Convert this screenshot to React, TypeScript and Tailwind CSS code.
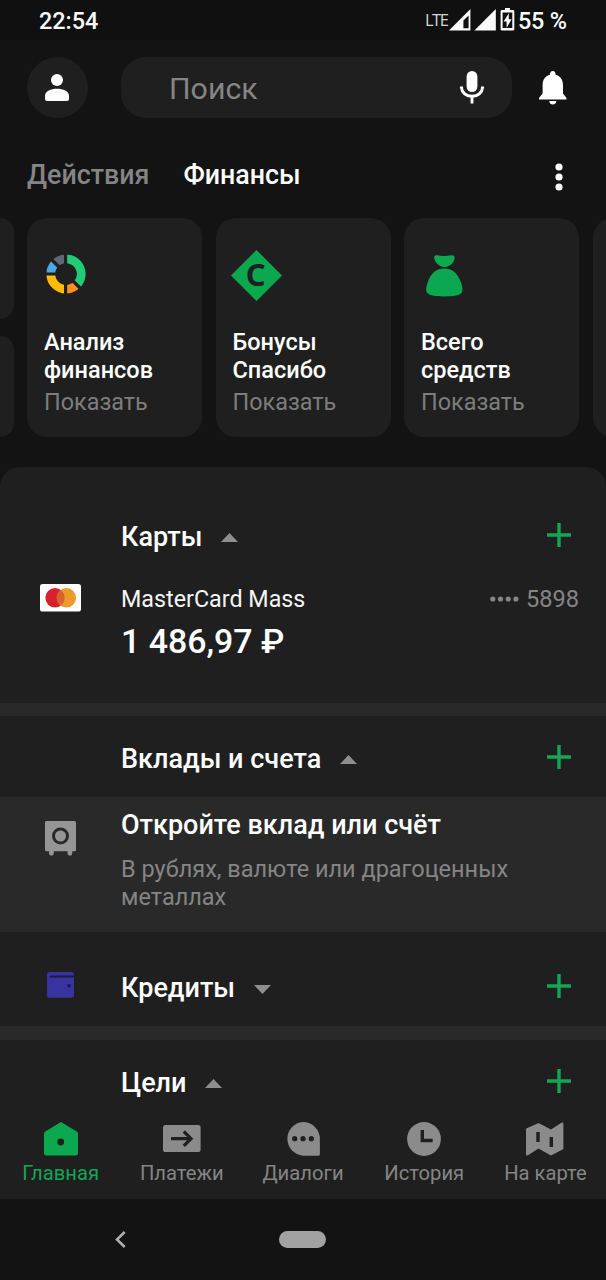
import React from 'react';

type IconProps = { className?: string };

const UserIcon = () => (
  <svg width="24" height="27" viewBox="0 0 24 27" fill="white">
    <circle cx="12" cy="6" r="6" />
    <path d="M0 22C0 17 6 14.7 12 14.7S24 17 24 22V25Q24 27 22 27H2Q0 27 0 25Z" />
  </svg>
);

const MicIcon = () => (
  <svg width="24" height="33" viewBox="0 0 24 33" fill="none">
    <rect x="6.6" y="0" width="10.8" height="21" rx="5.4" fill="white" />
    <path d="M1.4 15.5C1.4 21.5 6 25.3 12 25.3S22.6 21.5 22.6 15.5M12 25V32.5" stroke="white" strokeWidth="2.9" />
  </svg>
);

const BellIcon = () => (
  <svg width="28" height="34" viewBox="0 0 28 34" fill="white">
    <path d="M11 3.8C10.8 1.5 12 0 13.8 0S16.8 1.5 16.6 3.8C21.5 5 24 9 24 14V22.5L27.5 27V28.5H0V27L3.6 22.5V14C3.6 9 6 5 11 3.8Z" />
    <path d="M10.2 30H17.4Q16.8 33.5 13.8 33.5T10.2 30Z" />
  </svg>
);

const DonutIcon = () => (
  <svg width="40" height="40" viewBox="-20 -20 40 40" fill="none" strokeWidth="8.8">
    <path d="M0 -15.2A15.2 15.2 0 0 1 10.75 10.75" stroke="#21cc74" />
    <path d="M10.75 10.75A15.2 15.2 0 0 1 0 15.2" stroke="#ff8f1f" />
    <path d="M0 15.2A15.2 15.2 0 0 1 -15.2 0" stroke="#ffbb05" />
    <path d="M-15.2 0A15.2 15.2 0 0 1 -10.75 -10.75" stroke="#4ba9e6" />
    <path d="M-10.75 -10.75A15.2 15.2 0 0 1 0 -15.2" stroke="#5d6875" />
    <path d="M-.4 -20V20M-20 0H0M-15 -15L0 0L15 15" stroke="#1f1f1f" strokeWidth="3.2" />
  </svg>
);

const BonusIcon = () => (
  <svg width="51" height="51" viewBox="0 0 51 51">
    <path d="M25.5 0L51 25.5L25.5 51L0 25.5Z" fill="#0ba84f" />
    <text x="24.6" y="36.3" textAnchor="middle" fontSize="31" fontWeight="700" fontFamily="Noto Sans, Open Sans, sans-serif" fill="#1f1f1f">
      C
    </text>
  </svg>
);

const BagIcon = () => (
  <svg width="37" height="42" viewBox="0 0 37 42" fill="#0ba84f">
    <path d="M8.2 2C8.2 .5 9.6 0 11 .2C16 1.2 20 1.2 25.4 .2C27 0 28.6 .6 28.6 2.4C28.6 8 23 12 18.3 12S8.2 7.5 8.2 2Z" />
    <path d="M18.3 13.6C26 13.6 31 18 34 25C36 29.5 36.7 33 36.4 35.5C35.8 40.5 29 41.4 18.3 41.4S.9 40.5 .2 35.5C0 33 .6 29.5 2.6 25C5.6 18 10.6 13.6 18.3 13.6Z" />
  </svg>
);

const MastercardIcon = () => (
  <svg width="41" height="28" viewBox="0 0 41 28">
    <rect width="41" height="27.5" rx="2.6" fill="white" />
    <circle cx="15" cy="13.8" r="9.7" fill="#d6222f" />
    <circle cx="26.4" cy="13.8" r="9.7" fill="#ed9a2d" />
    <path d="M20.7 6A9.7 9.7 0 0 1 20.7 21.6A9.7 9.7 0 0 1 20.7 6Z" fill="#d8632f" />
  </svg>
);

const SafeIcon = () => (
  <svg width="31" height="35" viewBox="0 0 31 35" fill="#959595">
    <path d="M1.5 0H29.5Q31 0 31 1.5V28.8Q31 30.3 29.5 30.3H27.3V32.3A2.4 2.4 0 0 1 22.5 32.3V30.3H8.8V32.3A2.4 2.4 0 0 1 4 32.3V30.3H1.5Q0 30.3 0 28.8V1.5Q0 0 1.5 0Z" />
    <circle cx="15.5" cy="15" r="7" fill="none" stroke="#292929" strokeWidth="3" />
  </svg>
);

const WalletIcon = () => (
  <svg width="27" height="26" viewBox="0 0 27 26" className="-mt-px">
    <path d="M2.5 0H24.5Q27 0 27 2.5V23.5Q27 25.7 24.5 25.7H2.5Q0 25.7 0 23.5V2.5Q0 0 2.5 0Z" fill="#38339f" />
    <path d="M27 3.6H4Q2.6 3.8 2.6 4.7Q2.8 5.4 4 5.4H27Z" fill="#1c1b3f" />
    <circle cx="22" cy="13.8" r="1.8" fill="#1b1a45" />
  </svg>
);

const PlusIcon = () => (
  <svg width="24" height="24" viewBox="0 0 24 24">
    <path d="M12 0V24M0 12H24" stroke="#12a656" strokeWidth="3.4" />
  </svg>
);

const Caret = ({ className }: IconProps) => (
  <svg width="17" height="9" viewBox="0 0 17 9" className={className}>
    <path d="M0 9L8.5 0L17 9Z" fill="#8e8e8e" />
  </svg>
);

const HomeIcon = () => (
  <svg width="34" height="34" viewBox="0 0 34 34">
    <path d="M17 0L32.7 9.4Q34 10.2 34 11.8V31.3Q34 33.6 31.7 33.6H2.3Q0 33.6 0 31.3V11.8Q0 10.2 1.3 9.4Z" fill="#0ba84f" />
    <circle cx="16.7" cy="20" r="3.4" fill="#1f1f1f" />
  </svg>
);

const PaymentsIcon = () => (
  <svg width="38" height="27" viewBox="0 0 38 27">
    <rect width="37.6" height="27" rx="2.6" fill="#8b8b8b" />
    <path d="M8 13.7H27.5M20.8 6.5L28 13.7L20.8 20.9" fill="none" stroke="#1f1f1f" strokeWidth="3.2" />
  </svg>
);

const ChatIcon = () => (
  <svg width="34" height="34" viewBox="0 0 34 34">
    <path d="M17 0A16.9 16.9 0 0 1 33.9 16.9V32.3Q33.9 33.7 32.5 33.7H17A16.9 16.9 0 0 1 17 0Z" fill="#8b8b8b" />
    <g fill="#1f1f1f">
      <circle cx="8.7" cy="16.7" r="2.6" />
      <circle cx="17" cy="16.7" r="2.6" />
      <circle cx="25.3" cy="16.7" r="2.6" />
    </g>
  </svg>
);

const ClockIcon = () => (
  <svg width="34" height="34" viewBox="0 0 34 34">
    <circle cx="17" cy="17" r="16.9" fill="#8b8b8b" />
    <path d="M15.3 8V18.5H25.7" fill="none" stroke="#1f1f1f" strokeWidth="3.4" />
  </svg>
);

const MapIcon = () => (
  <svg width="38" height="34" viewBox="0 0 38 34">
    <path d="M0 7.5Q0 6.7 .8 6.3L11.5 1.5Q12.5 1 13.5 1.5L25 7.6L35.5 .8Q37.4 0 37.4 2V26.4Q37.4 27.2 36.6 27.6L26 33Q25 33.4 24 33L12.5 26.6L2 33.3Q0 34 0 32.4Z" fill="#8b8b8b" />
    <path d="M12 10V20M25.3 15V25" stroke="#1f1f1f" strokeWidth="3.4" />
  </svg>
);

const StatusBar = () => (
  <div className="flex h-10 items-center justify-between bg-[#101010] pl-[39px] pr-[39px] pt-[4px] text-[23.4px] font-medium text-[#fafafa]">
    <span>22:54</span>
    <div className="flex items-center">
      <span className="mr-[2px] mt-[-4px] w-[22px] font-['Open_Sans',sans-serif] text-[16.5px] font-normal tracking-[-1.5px] text-[#d6d6d6]">LTE</span>
      <svg width="67" height="23" viewBox="0 0 67 23" className="mr-[2px] mt-[-4px]" fill="#fafafa">
        <path fillRule="evenodd" d="M21.4 1V22.4H0ZM19.6 7.5L14.4 12.5V20.3H19.6Z" />
        <path d="M46.8 1V22.4H25.4Z" />
        <path fillRule="evenodd" d="M56 0H61V2H64Q65.3 2 65.3 3.3V21.2Q65.3 22.5 64 22.5H53Q51.6 22.5 51.6 21.2V3.3Q51.6 2 53 2H56ZM53.6 4.6V20H63.3V4.6Z" />
        <path d="M59.8 5.3L54.6 13.6H57.6V19.8L62.6 11.3H59.8Z" />
      </svg>
      <span className="w-[49px] whitespace-nowrap tracking-[-.25px]">55 %</span>
    </div>
  </div>
);

const SearchRow = () => (
  <div className="flex h-[61px] items-center pl-[27px]">
    <div className="flex size-[61px] items-center justify-center rounded-full bg-[#1f1f1f] pr-px">
      <UserIcon />
    </div>
    <div className="ml-[33px] flex h-[61px] w-[391px] items-center justify-between rounded-[25px] bg-[#1f1f1f] pl-12 pr-7">
      <span className="pt-[3px] text-[30.3px] text-[#858585]">Поиск</span>
      <MicIcon />
    </div>
    <div className="ml-[27px]">
      <BellIcon />
    </div>
  </div>
);

const Tabs = () => (
  <div className="flex h-[60px] items-center px-[27px] text-[26.8px] font-medium">
    <span className="text-[#858585]">Действия</span>
    <span className="ml-[34px] text-white">Финансы</span>
    <svg width="8" height="28" viewBox="0 0 8 28" fill="white" className="ml-auto mr-4 mt-1">
      <circle cx="4" cy="4" r="3.6" />
      <circle cx="4" cy="14" r="3.6" />
      <circle cx="4" cy="24" r="3.6" />
    </svg>
  </div>
);

const tiles = [
  { title: ['Анализ', 'финансов'], icon: <DonutIcon />, pad: 'pl-[19px] pt-[2px]' },
  { title: ['Бонусы', 'Спасибо'], icon: <BonusIcon />, pad: 'pl-[15px] pt-[5px]' },
  { title: ['Всего', 'средств'], icon: <BagIcon />, pad: 'pl-[22px] pt-[6px]' },
];

const Tiles = () => (
  <div className="flex h-[219px] gap-[13.5px] overflow-hidden">
    <div className="flex w-[13.5px] shrink-0 flex-col justify-between">
      <div className="h-[101px] rounded-r-[14px] bg-[#1f1f1f]" />
      <div className="h-[101px] rounded-r-[14px] bg-[#1f1f1f]" />
    </div>
    {tiles.map((tile) => (
      <div key={tile.title[0]} className="w-[175px] shrink-0 rounded-[20px] bg-[#1f1f1f]">
        <div className={`flex h-[110px] items-center ${tile.pad}`}>{tile.icon}</div>
        <div className="pl-[17px] pt-px text-[23.5px] leading-[27.7px]">
          <div className="font-medium text-white">
            {tile.title[0]}
            <br />
            {tile.title[1]}
          </div>
          <div className="mt-[4.5px] text-[23.4px] text-[#7d7d7d]">Показать</div>
        </div>
      </div>
    ))}
    <div className="w-[175px] shrink-0 rounded-[20px] bg-[#1f1f1f]" />
  </div>
);

type HeaderProps = { title: string; open?: boolean; icon?: React.ReactNode };

const SectionHeader = ({ title, open, icon }: HeaderProps) => (
  <div className="flex h-[81px] items-center pr-[35px]">
    <div className="flex w-[121px] justify-center">{icon}</div>
    <span className="pt-[6px] text-[27px] font-medium text-white">{title}</span>
    <Caret className={open ? 'ml-[19px] mt-[5px]' : 'ml-[19px] mt-[7px] rotate-180'} />
    <div className="ml-auto">
      <PlusIcon />
    </div>
  </div>
);

const navItems = [
  { label: 'Главная', icon: <HomeIcon />, active: true },
  { label: 'Платежи', icon: <PaymentsIcon /> },
  { label: 'Диалоги', icon: <ChatIcon /> },
  { label: 'История', icon: <ClockIcon /> },
  { label: 'На карте', icon: <MapIcon /> },
];

const BottomNav = () => (
  <div className="grid h-[95px] grid-cols-5 bg-[#1f1f1f]">
    {navItems.map((item) => (
      <div key={item.label} className="flex flex-col items-center pt-[17px]">
        <div className="flex h-[35px] items-center">{item.icon}</div>
        <span className={`mt-[5px] whitespace-nowrap text-[20.2px] leading-6 ${item.active ? 'text-[#12a656]' : 'text-[#858585]'}`}>
          {item.label}
        </span>
      </div>
    ))}
  </div>
);

const App: React.FC = () => {
  return (
    <div className="flex h-[1280px] w-[606px] flex-col overflow-hidden bg-[#131313] font-[Roboto,sans-serif]">
      <StatusBar />
      <div className="h-[17px]" />
      <SearchRow />
      <div className="h-[27px]" />
      <Tabs />
      <div className="h-[13px]" />
      <Tiles />

      <div className="mt-[30px] h-[637px] overflow-hidden rounded-t-[20px] bg-[#1f1f1f]">
        {/* Cards */}
        <div className="h-[236px] pt-[27px]">
          <SectionHeader title="Карты" open />
          <div className="flex pr-[27px] pt-[9px]">
            <div className="flex w-[121px] justify-center">
              <MastercardIcon />
            </div>
            <div>
              <div className="pt-px text-[23.3px] leading-[28px] text-[#f5f5f5]">MasterCard Mass</div>
              <div className="mt-2 text-[33.9px] font-medium leading-[42px] text-white">1 486,97 ₽</div>
            </div>
            <div className="ml-auto flex h-[30px] items-center text-[23.6px] text-[#858585]">
              <svg width="29" height="6" viewBox="0 0 29 6" fill="currentColor" className="mr-[7px]">
                <circle cx="2.8" cy="3" r="2.6" />
                <circle cx="10.5" cy="3" r="2.6" />
                <circle cx="18.2" cy="3" r="2.6" />
                <circle cx="25.9" cy="3" r="2.6" />
              </svg>
              <span className="pt-[2px]">5898</span>
            </div>
          </div>
        </div>
        <div className="h-[13px] bg-[#292929]" />

        {/* Deposits */}
        <SectionHeader title="Вклады и счета" open />
        <div className="flex h-[135px] bg-[#292929]">
          <div className="flex w-[121px] justify-center pt-6">
            <SafeIcon />
          </div>
          <div className="pt-[12px]">
            <div className="text-[27px] font-medium leading-8 text-white">Откройте вклад или счёт</div>
            <div className="mt-[15px] w-[430px] text-[23.5px] leading-[27.7px] text-[#858585]">
              В рублях, валюте или драгоценных металлах
            </div>
          </div>
        </div>

        {/* Loans */}
        <div className="pt-[13px]">
          <SectionHeader title="Кредиты" icon={<WalletIcon />} />
        </div>
        <div className="h-[14px] bg-[#292929]" />

        {/* Goals */}
        <SectionHeader title="Цели" open />
      </div>

      <BottomNav />

      <div className="flex h-[81px] items-center">
        <svg width="11" height="17" viewBox="0 0 11 17" className="ml-[115px]" fill="none">
          <path d="M9.7 1L2 8.5L9.7 16" stroke="#b0b0b0" strokeWidth="2.5" />
        </svg>
        <div className="ml-[153px] h-[17px] w-[47px] rounded-full bg-[#a2a2a2]" />
      </div>
    </div>
  );
};

export default App;
